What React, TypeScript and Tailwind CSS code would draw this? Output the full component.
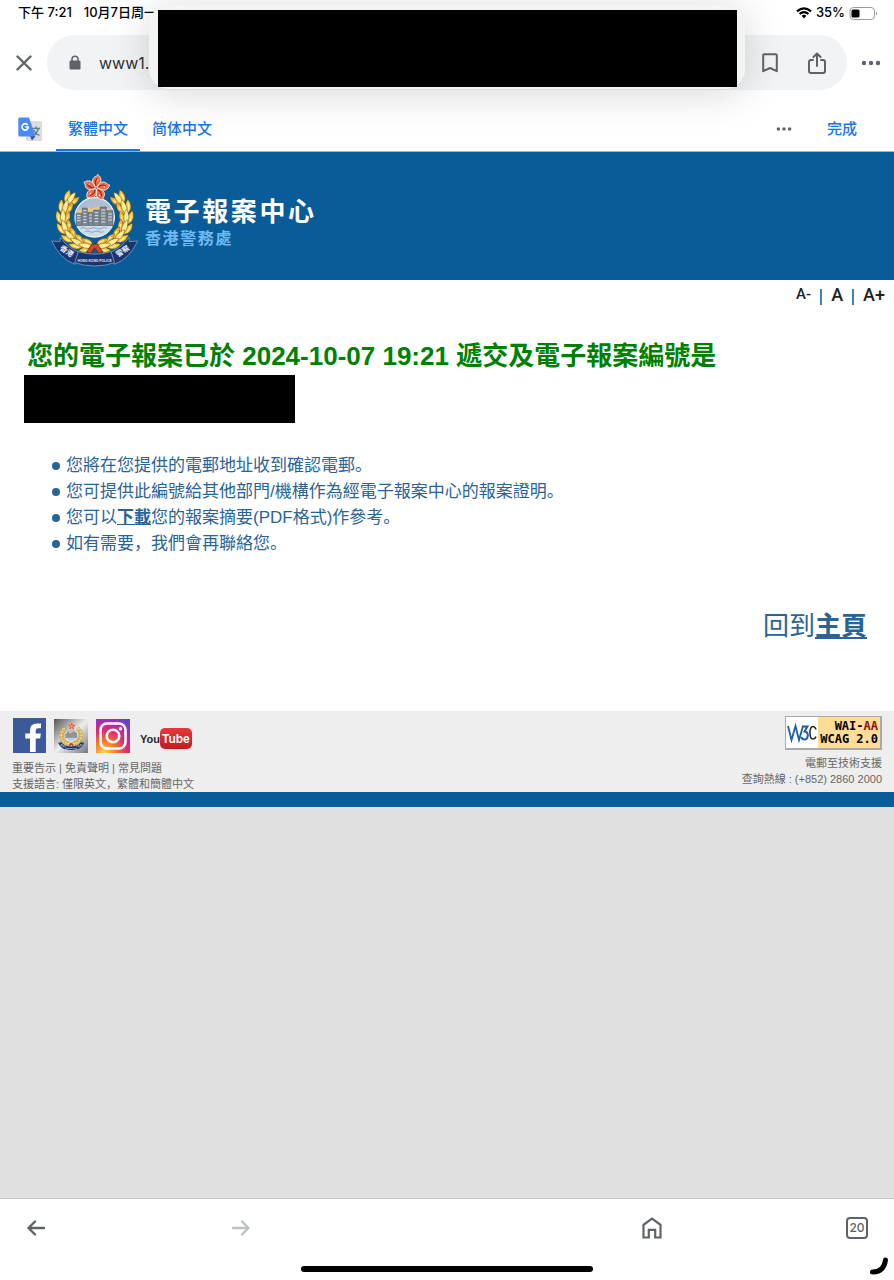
import React from 'react';

const LEAVES = [
  { x: 76, y: 94, r: 36 },
  { x: 60, y: 120, r: 18 },
  { x: 54, y: 150, r: 0 },
  { x: 60, y: 180, r: -20 },
  { x: 76, y: 205, r: -42 },
  { x: 99, y: 224, r: -60 },
  { x: 126, y: 234, r: -78 },
];

function LeafCluster({ x, y, r }: { x: number; y: number; r: number }) {
  return (
    <g transform={`translate(${x} ${y}) rotate(${r})`} stroke="#5d4312" strokeWidth="1.3">
      <path d="M-3 19 C-24 10 -24 -8 -18 -22 C-6 -12 0 2 -1 19Z" fill="#f6cb45" />
      <path d="M3 19 C24 10 24 -8 18 -22 C6 -12 0 2 1 19Z" fill="#f0b535" />
      <path d="M0 21 C-11 6 -9 -14 0 -26 C9 -14 11 6 0 21Z" fill="#ffea8c" />
      <path d="M-12 9 L-15 -8 M12 9 L15 -8" stroke="#fff0a5" strokeWidth="4" />
      <circle cx="0" cy="17" r="4.500" fill="#c8452f" stroke="none" />
    </g>
  );
}

function Emblem({ className }: { className: string }) {
  return (
    <svg viewBox="0 0 294 312" className={className} aria-hidden="true">
      {LEAVES.map((l) => (
        <LeafCluster key={`l${l.y}`} {...l} />
      ))}
      <g transform="translate(298 0) scale(-1 1)">
        {LEAVES.map((l) => (
          <LeafCluster key={`r${l.y}`} {...l} />
        ))}
      </g>
      <circle cx="149" cy="148" r="59" fill="#d6e2ee" stroke="#eef3f8" strokeWidth="4" />
      <path d="M93 137 A57 57 0 0 1 205 137 L205 150 H93Z" fill="#aebfd2" />
      <path d="M95 132 Q115 112 140 122 Q175 106 202 130 V150 H94Z" fill="#f5c77c" />
      <g fill="#7c8794" stroke="#424c58" strokeWidth="1.5">
        <path d="M93 136h17v38H93z" />
        <path d="M112 120h15v55h-15z" />
        <path d="M129 133h15v42h-15z" />
        <path d="M146 126h17v49h-17z" />
        <path d="M165 117h19v58h-19z" />
        <path d="M186 128h18v46h-18z" />
      </g>
      <path
        d="M96 142h11M96 150h11M96 158h11M115 128h9M115 137h9M115 146h9M115 155h9M115 164h9M132 141h9M132 150h9M132 159h9M149 134h11M149 143h11M149 152h11M149 161h11M168 126h13M168 135h13M168 144h13M168 153h13M168 162h13M189 138h12M189 147h12M189 156h12"
        stroke="#d9dfe5"
        strokeWidth="3"
      />
      <path d="M96 174 H202 Q187 205 149 205 Q111 205 96 174Z" fill="#cfdcea" />
      <path d="M106 181q8-5 16 0t16 0t16 0t16 0t16 0M120 191q7-4 14 0t14 0t14 0t14 0" fill="none" stroke="#7e97b5" strokeWidth="2.5" />
      <path d="M141 228 H157 L174 252 L161 256 L149 240 L137 256 L124 252Z" fill="#c94a2c" stroke="#5c1712" strokeWidth="2" />
      <g transform="translate(154 60)">
        {[4, 76, 148, 220, 292].map((a) => (
          <g key={a} transform={`rotate(${a})`}>
            <path
              d="M0 -3 C-12 -10 -17 -22 -9 -31 C-5 -36 0 -34 1 -41 C14 -33 18 -18 0 -3Z"
              fill="#ee6a48"
              stroke="#fff3e5"
              strokeWidth="2.5"
            />
            <path d="M-1 -6 Q-8 -18 0 -29" fill="none" stroke="#8e2119" strokeWidth="3" />
            <circle cx="3" cy="-24" r="2" fill="#fff" />
          </g>
        ))}
      </g>
      <g fill="#17356f" stroke="#8397b5" strokeWidth="2.5" strokeLinejoin="round">
        <path d="M20 219 L45 221 L46 208 Q66 238 100 252 L90 289 Q44 272 20 219Z" />
        <path d="M278 219 L253 221 L252 208 Q232 238 198 252 L208 289 Q254 272 278 219Z" />
        <path d="M100 251 Q149 266 198 251 L209 284 Q149 304 89 284Z" />
      </g>
      <g fill="#e9eff8" textAnchor="middle">
        <text x="149" y="281" fontSize="10" fontWeight="700" fontFamily="Liberation Sans, sans-serif">
          HONG KONG POLICE
        </text>
        <text x="65" y="257" fontSize="22" fontFamily="Noto Sans CJK TC, sans-serif" transform="rotate(34 65 250)">
          香港
        </text>
        <text x="233" y="257" fontSize="22" fontFamily="Noto Sans CJK TC, sans-serif" transform="rotate(-34 233 250)">
          警察
        </text>
      </g>
    </svg>
  );
}

function StatusBar() {
  return (
    <div className="flex h-[26px] items-center justify-between pl-[18px] pr-4 text-[13px] font-medium text-black">
      <div className="flex gap-3 whitespace-nowrap">
        <span>下午 7:21</span>
        <span>10月7日周一</span>
      </div>
      <div className="flex items-center gap-1">
        <svg viewBox="0 0 16 12" className="h-3 w-4" fill="none" stroke="#000" strokeWidth="2.2" aria-hidden="true">
          <path d="M1 4.3 Q8 -1.7 15 4.3" />
          <path d="M3.5 7 Q8 3.1 12.5 7" />
          <path d="M5.6 8.7 Q8 6.9 10.4 8.7 L8 11.6Z" fill="#000" stroke="none" />
        </svg>
        <span>35%</span>
        <svg viewBox="0 0 29 13" className="h-[13px] w-[29px]" aria-hidden="true">
          <rect x="1" y="0.500" width="24.5" height="12" rx="3.5" fill="none" stroke="#9a9a9a" />
          <rect x="2.5" y="2.5" width="8" height="8" rx="1.5" fill="#000" />
          <path d="M27 4.5 Q29 6.5 27 8.5Z" fill="#8c8c8c" />
        </svg>
      </div>
    </div>
  );
}

function Dots({ className }: { className: string }) {
  return (
    <svg viewBox="0 0 20 6" className={className} fill="#5f6368" aria-hidden="true">
      <circle cx="3" cy="3" r="2.2" />
      <circle cx="10" cy="3" r="2.2" />
      <circle cx="17" cy="3" r="2.2" />
    </svg>
  );
}

function AddressBar() {
  return (
    <div className="mt-[9px] flex h-[55px] items-center">
      <button aria-label="關閉" className="flex w-[47px] justify-center">
        <svg viewBox="0 0 16 16" className="size-4" stroke="#5f6368" strokeWidth="2.4" strokeLinecap="round" aria-hidden="true">
          <path d="M1.5 1.5 14.5 14.5 M14.5 1.5 1.5 14.5" />
        </svg>
      </button>
      <div className="flex h-full flex-1 items-center rounded-full bg-[#f1f3f4] pl-[22px] pr-5">
        <svg viewBox="0 0 12 15" className="h-[15px] w-3" aria-hidden="true">
          <path d="M3 7V4.2a3 3 0 0 1 6 0V7" fill="none" stroke="#5f6368" strokeWidth="1.5" />
          <rect x="0.5" y="5.5" width="11" height="9" rx="1.3" fill="#5f6368" />
        </svg>
        <input
          aria-label="網址"
          readOnly
          defaultValue="www1."
          className="ml-[18px] w-20 bg-transparent text-base text-[#303134] outline-none"
        />
        <button aria-label="書籤" className="ml-auto">
          <svg viewBox="0 0 16 20" className="h-5 w-4" fill="none" stroke="#5f6368" strokeWidth="2" strokeLinejoin="round" aria-hidden="true">
            <path d="M1.2 2.2a1 1 0 0 1 1-1h11.6a1 1 0 0 1 1 1v16L8 15 1.2 18.2Z" />
          </svg>
        </button>
        <button aria-label="分享" className="ml-[29px]">
          <svg viewBox="0 0 20 22" className="h-[22px] w-5" fill="none" stroke="#5f6368" strokeWidth="2" strokeLinecap="round" strokeLinejoin="round" aria-hidden="true">
            <path d="M6 8H4a2 2 0 0 0-2 2v9a2 2 0 0 0 2 2h12a2 2 0 0 0 2-2v-9a2 2 0 0 0-2-2h-2" />
            <path d="M10 14V1.5M6.5 5 10 1.5 13.5 5" />
          </svg>
        </button>
      </div>
      <button aria-label="更多" className="flex w-[47px] justify-center">
        <Dots className="h-6 w-5" />
      </button>
    </div>
  );
}

function TranslateBar() {
  return (
    <nav className="mt-4 flex h-[46px] items-stretch border-b border-[#9fb4c4] pl-[18px] pr-[25px] text-[15px] font-medium text-[#1a73e8]">
      <svg viewBox="0 0 24 24" className="mt-[11px] size-6" aria-hidden="true">
        <rect x="8" y="4" width="16" height="20" rx="1.5" fill="#dcdcdc" />
        <path d="M14 11.5h8M18 9.5v2M20.5 11.5q-1.5 5-6 7M15.5 13q2 4 6 5.5" fill="none" stroke="#607d8b" strokeWidth="1.3" />
        <path d="M12 19h5.5L14 23.5Z" fill="#3949ab" />
        <path d="M1.5 0.5H11L17.5 19.5H1.5Q0.3 19.5 0.3 18V2Q0.3 0.5 1.5 0.5Z" fill="#4a8af4" />
        <path d="M9.7 8A3.2 3.2 0 1 0 10.3 10H7.3" fill="none" stroke="#fff" strokeWidth="1.6" />
      </svg>
      <button className="ml-[14px] flex items-center border-b-2 border-[#1a73e8] px-3 pt-[3px]">繁體中文</button>
      <button className="flex items-center border-b-2 border-transparent px-3 pt-[3px]">简体中文</button>
      <button aria-label="翻譯選項" className="ml-auto">
        <Dots className="h-5 w-4" />
      </button>
      <button className="ml-[23px] px-3 pt-px">完成</button>
    </nav>
  );
}

function TextSizer() {
  return (
    <div className="flex h-[30px] items-center justify-end gap-[9px] pr-[9px] font-['Roboto',sans-serif] text-lg font-medium text-[#222]">
      <button className="text-[15px]">A-</button>
      <span className="mt-1 h-4 w-[2px] bg-[#3f83b5]" />
      <button>A</button>
      <span className="mt-1 h-4 w-[2px] bg-[#3f83b5]" />
      <button>A+</button>
    </div>
  );
}

function Bullet({ children }: { children: React.ReactNode }) {
  return (
    <li className="flex items-center gap-[6px]">
      <span className="size-2 shrink-0 rounded-full bg-[#2a6496]" />
      <span>{children}</span>
    </li>
  );
}

function Footer() {
  return (
    <footer className="flex justify-between border-b-[15px] border-[#0a5c99] bg-[#eee] px-3 text-[11px] leading-4 text-[#666]">
      <div className="pt-[7px]">
        <div className="flex h-[42px] items-start gap-2">
          <a href="#facebook" aria-label="Facebook">
            <svg viewBox="0 0 34 35" className="h-[35px] w-[34px]" aria-hidden="true">
              <rect x="1" width="33" height="35" fill="#3c5a9a" />
              <path d="M18 34V20.500h-4.700v-5H18v-3.200Q18 5.500 25 5.500h4v4.800h-2.800Q23.700 10.300 23.700 12.600v2.900h5.200l-.8 5h-4.400V34Z" fill="#fff" />
            </svg>
          </a>
          <a href="#app" aria-label="香港警隊流動應用程式" className="mt-px flex h-[34px] w-[34px] items-center justify-center bg-linear-135 from-[#555] via-[#eee] to-[#777]">
            <Emblem className="h-8 w-[30px]" />
          </a>
          <a href="#instagram" aria-label="Instagram">
            <svg viewBox="0 0 34 35" className="h-[35px] w-[34px]" aria-hidden="true">
              <defs>
                <radialGradient id="ig" cx="0.25" cy="1" r="1.15">
                  <stop offset="0" stopColor="#ffd65a" />
                  <stop offset="0.3" stopColor="#fa7a22" />
                  <stop offset="0.58" stopColor="#dd2a72" />
                  <stop offset="0.85" stopColor="#9a2fc0" />
                  <stop offset="1" stopColor="#5546d8" />
                </radialGradient>
              </defs>
              <rect y="1" width="34" height="34" fill="url(#ig)" />
              <g fill="none" stroke="#fff" strokeWidth="2.600">
                <rect x="4.500" y="5.500" width="25" height="25" rx="6.500" />
                <circle cx="17" cy="18" r="6.300" />
              </g>
              <circle cx="24.500" cy="10.800" r="1.700" fill="#fff" />
            </svg>
          </a>
          <a href="#youtube" aria-label="YouTube" className="mt-[10px] ml-[2px] flex h-[21px] items-center font-['Liberation_Sans',sans-serif] text-[11px] font-bold text-[#282828]">
            You
            <span className="flex h-[21px] items-center rounded-[5px] bg-linear-to-b from-[#e5393b] to-[#c41a1f] px-[2px] text-xs text-white">Tube</span>
          </a>
        </div>
        <p>
          <a href="#notices">重要告示</a> | <a href="#disclaimer">免責聲明</a> | <a href="#faq">常見問題</a>
        </p>
        <p>支援語言: 僅限英文，繁體和簡體中文</p>
      </div>
      <div className="flex flex-col items-end pt-[5px]">
        <a
          href="#wcag"
          className="mb-[5px] flex h-[34px] border border-b-2 border-r-2 border-[#aaa] bg-[#ffdc98] font-['DejaVu_Sans_Mono',monospace] text-[12px] font-bold leading-[13px] text-black"
        >
          <svg viewBox="0 0 32 31" className="h-full w-8 bg-white" fill="none" aria-label="W3C">
            <path d="M2 9 5.500 23 9.500 9 13 23 17 9" stroke="#1b5fa4" strokeWidth="1.800" />
            <path d="M16 9.500h5.500L18.500 14.500q3.500 .5 3.300 4Q21.500 22.500 18.500 22.500q-2.500 0-3.300-2.500" stroke="#1b5fa4" strokeWidth="2" />
            <path d="M30 12.500Q29 9.500 27 9.500q-3 0-3 6.300t3 6.300q2 0 3-2.500" stroke="#222" strokeWidth="1.500" />
          </svg>
          <span className="flex flex-col items-end justify-center px-[2px] pt-px">
            <span>
              WAI-<span className="text-[#8c1010]">AA</span>
            </span>
            <span>WCAG 2.0</span>
          </span>
        </a>
        <a href="#support">電郵至技術支援</a>
        <p>查詢熱線 : (+852) 2860 2000</p>
      </div>
    </footer>
  );
}

function BottomBar() {
  return (
    <div className="relative flex h-[82px] flex-col justify-between border-t border-[#c8c8c8] bg-white pb-2 pt-[9px]">
      <div className="flex items-center justify-between pl-4 pr-[17px] text-[#5f6368]">
        <button aria-label="返回" className="flex h-10 w-10 items-center justify-center">
          <svg viewBox="0 0 18 16" className="h-4 w-[18px]" fill="none" stroke="currentColor" strokeWidth="2.4" strokeLinecap="round" strokeLinejoin="round" aria-hidden="true">
            <path d="M17 8H1.500M8 1.500 1.500 8 8 14.500" />
          </svg>
        </button>
        <button aria-label="前進" disabled className="flex h-10 w-10 items-center justify-center text-[#bdc1c6]">
          <svg viewBox="0 0 18 16" className="h-4 w-[18px]" fill="none" stroke="currentColor" strokeWidth="2.4" strokeLinecap="round" strokeLinejoin="round" aria-hidden="true">
            <path d="M1 8H16.500M10 1.500 16.500 8 10 14.500" />
          </svg>
        </button>
        <span className="w-10" />
        <button aria-label="首頁" className="flex h-10 w-10 items-center justify-center">
          <svg viewBox="0 0 20 22" className="h-[22px] w-5" fill="none" stroke="currentColor" strokeWidth="2.2" aria-hidden="true">
            <path d="M1.500 20.500V7.800L10 1.700l8.500 6.100v12.700h-5.300v-7.700H6.800v7.700Z" />
          </svg>
        </button>
        <button aria-label="分頁" className="flex h-10 w-10 items-center justify-center">
          <span className="flex size-[22px] items-center justify-center rounded-[4px] border-2 border-[#5f6368] text-[12px] font-medium leading-none">20</span>
        </button>
      </div>
      <span className="mx-auto h-[6px] w-[292px] rounded-full bg-black" />
      <svg viewBox="0 0 20 20" className="absolute bottom-1 right-1 size-5" fill="none" stroke="#000" strokeWidth="5" strokeLinecap="round" aria-hidden="true">
        <path d="M2.500 16Q14 16 15.500 4" />
      </svg>
    </div>
  );
}

export default function App() {
  return (
    <div className="relative flex min-h-screen flex-col bg-[#e0e0e0] font-['Inter','Noto_Sans_CJK_SC',sans-serif]">
      <header className="bg-white">
        <StatusBar />
        <AddressBar />
        <TranslateBar />
      </header>
      <div className="absolute left-1/2 top-[5px] h-[84px] w-[596px] -translate-x-1/2 rounded-[20px] bg-[#f3f5f5] pt-[5px] shadow-[0_4px_40px_rgba(0,0,0,0.16)]">
        <div className="mx-auto h-[77px] w-[579px] bg-black" />
      </div>

      <main className="bg-white font-['Liberation_Sans','Noto_Sans_CJK_SC',sans-serif] text-[#2a6496]">
        <div className="flex h-32 items-start bg-[#0a5c99] pl-[45px] pt-4 font-['Noto_Sans_CJK_TC',sans-serif] font-bold">
          <Emblem className="h-[104px] w-[98px]" />
          <div className="ml-[2px] mt-[26px]">
            <p className="text-[26px] leading-8 tracking-widest text-white">電子報案中心</p>
            <p className="text-base leading-[22px] tracking-widest text-[#6db9f2]">香港警務處</p>
          </div>
        </div>
        <TextSizer />
        <h1 className="mt-[31px] px-[27px] text-[26px] font-bold leading-[30px] text-[#008000]">
          您的電子報案已於 2024-10-07 19:21 遞交及電子報案編號是
        </h1>
        <div className="ml-6 mt-1 h-12 w-[271px] bg-black" />
        <ul className="ml-[52px] mt-[30px] text-[17px] leading-[26px]">
          <Bullet>您將在您提供的電郵地址收到確認電郵。</Bullet>
          <Bullet>您可提供此編號給其他部門/機構作為經電子報案中心的報案證明。</Bullet>
          <Bullet>
            您可以
            <a href="#download" className="font-bold underline">下載</a>
            您的報案摘要(PDF格式)作參考。
          </Bullet>
          <Bullet>如有需要，我們會再聯絡您。</Bullet>
        </ul>
        <p className="mt-[53px] pb-[69px] pr-[27px] text-right text-[26px] leading-8">
          回到
          <a href="#home" className="font-bold underline">主頁</a>
        </p>
        <Footer />
      </main>
      <div className="flex-1" />
      <BottomBar />
    </div>
  );
}
